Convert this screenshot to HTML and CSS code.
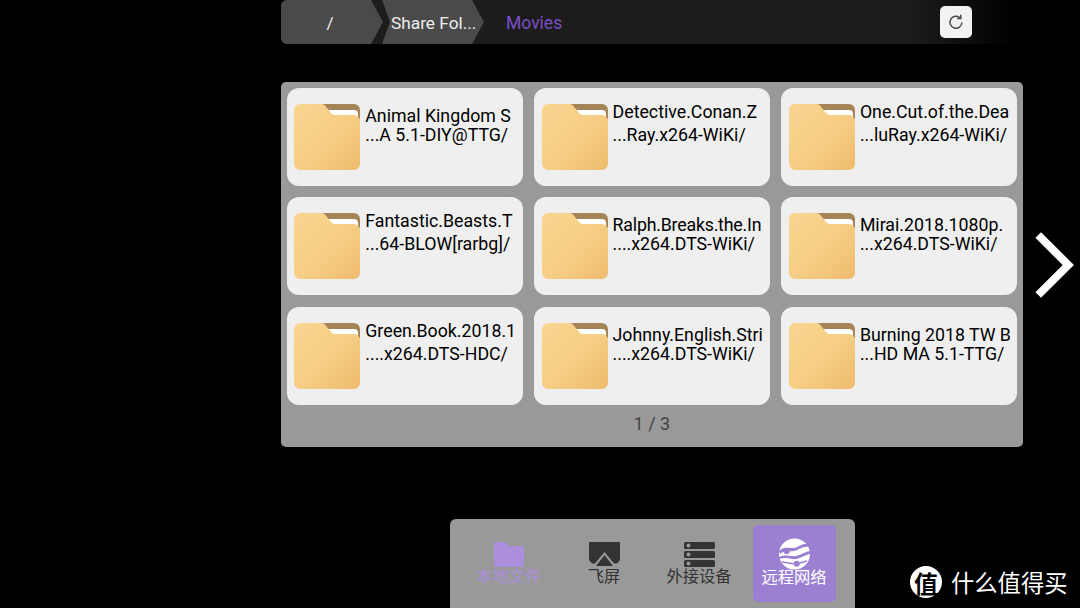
FILE: index.html
```html
<!DOCTYPE html>
<html lang="en">

<head>
  <meta charset="UTF-8">
  <meta name="viewport" content="width=device-width, initial-scale=1.0">
  <title>Movies</title>

  <link rel="stylesheet" href="styles.css">
</head>

<body>

  <svg class="defs" width="0" height="0">
    <defs>
      <linearGradient id="folderFill" x1="0" y1="0" x2="1" y2="1">
        <stop offset="0" stop-color="#f9d590" />
        <stop offset="0.55" stop-color="#f6cd84" />
        <stop offset="1" stop-color="#eebb6d" />
      </linearGradient>
      <symbol id="folder" viewBox="0 0 66 66">
        <path d="M28 0H60a6 6 0 0 1 6 6V15H34z" fill="#a58558" />
        <path d="M32 6H60a4 4 0 0 1 4 4V13H36z" fill="#ffffff" />
        <path d="M6 0H28a4 4 0 0 1 3 1.500L37 9a5 5 0 0 0 4 2H60a6 6 0 0 1 6 6V60a6 6 0 0 1-6 6H6a6 6 0 0 1-6-6V6a6 6 0 0 1 6-6z" fill="url(#folderFill)" />
      </symbol>
    </defs>
  </svg>

  <main class="page">

    <header class="pathbar">
      <div class="crumb crumb-root">/</div>
      <div class="crumb crumb-share">Share Fol...</div>
      <div class="crumb-current">Movies</div>
      <button class="refresh" aria-label="Refresh">
        <svg width="16" height="16" viewBox="0 0 16 16" fill="none" stroke="#4a4a4a" stroke-width="1.500">
          <path d="M14 8.500a6 6 0 1 1-1.900-4.700" />
          <path d="M12.800 0.800V4.500H9.100" />
        </svg>
      </button>
    </header>

    <div class="browser">
      <section class="panel">
        <div class="grid">

          <div class="card">
            <svg class="folder"><use href="#folder" /></svg>
            <div class="name name-low">
              <span>Animal Kingdom S</span>
              <span>...A 5.1-DIY@TTG/</span>
            </div>
          </div>
          <div class="card">
            <svg class="folder"><use href="#folder" /></svg>
            <div class="name">
              <span>Detective.Conan.Z</span>
              <span>...Ray.x264-WiKi/</span>
            </div>
          </div>
          <div class="card">
            <svg class="folder"><use href="#folder" /></svg>
            <div class="name">
              <span>One.Cut.of.the.Dea</span>
              <span>...luRay.x264-WiKi/</span>
            </div>
          </div>

          <div class="card">
            <svg class="folder"><use href="#folder" /></svg>
            <div class="name">
              <span>Fantastic.Beasts.T</span>
              <span>...64-BLOW[rarbg]/</span>
            </div>
          </div>
          <div class="card">
            <svg class="folder"><use href="#folder" /></svg>
            <div class="name name-low name-tight">
              <span>Ralph.Breaks.the.In</span>
              <span>....x264.DTS-WiKi/</span>
            </div>
          </div>
          <div class="card">
            <svg class="folder"><use href="#folder" /></svg>
            <div class="name name-low">
              <span>Mirai.2018.1080p.</span>
              <span>...x264.DTS-WiKi/</span>
            </div>
          </div>

          <div class="card">
            <svg class="folder"><use href="#folder" /></svg>
            <div class="name">
              <span>Green.Book.2018.1</span>
              <span>....x264.DTS-HDC/</span>
            </div>
          </div>
          <div class="card">
            <svg class="folder"><use href="#folder" /></svg>
            <div class="name name-low">
              <span>Johnny.English.Stri</span>
              <span>....x264.DTS-WiKi/</span>
            </div>
          </div>
          <div class="card">
            <svg class="folder"><use href="#folder" /></svg>
            <div class="name name-low">
              <span>Burning 2018 TW B</span>
              <span>...HD MA 5.1-TTG/</span>
            </div>
          </div>

        </div>
        <div class="pager">1 / 3</div>
      </section>

      <svg class="next" width="39" height="66" viewBox="0 0 39 66" fill="none" stroke="#fff" stroke-width="8">
        <path d="M3.200 3L33.300 33L3.200 63" />
      </svg>
    </div>

    <nav class="dock">
      <div class="tab tab-local">
        <svg width="30" height="25" viewBox="0 0 30 25" fill="#ab8fdc">
          <path d="M2 0H11L15 4H28a2 2 0 0 1 2 2V23a2 2 0 0 1-2 2H2a2 2 0 0 1-2-2V2a2 2 0 0 1 2-2z" />
        </svg>
        <span>本地文件</span>
      </div>
      <div class="tab">
        <svg width="31" height="25" viewBox="0 0 31 25" fill="#333">
          <path d="M1 0H30a1 1 0 0 1 1 1V18L28 21.500H25L15.500 10L6 21.500H3L0 18V1a1 1 0 0 1 1-1z" />
          <path d="M15.500 13L24 24H7z" />
        </svg>
        <span>飞屏</span>
      </div>
      <div class="tab">
        <svg width="31" height="25" viewBox="0 0 31 25">
          <rect width="31" height="7" y="0" rx="1.500" fill="#333" />
          <rect width="31" height="7" y="9" rx="1.500" fill="#333" />
          <rect width="31" height="7" y="18" rx="1.500" fill="#333" />
          <circle cx="4.500" cy="3.500" r="2" fill="#999" />
          <circle cx="4.500" cy="12.500" r="2" fill="#999" />
          <circle cx="4.500" cy="21.500" r="2" fill="#999" />
        </svg>
        <span>外接设备</span>
      </div>
      <div class="tab tab-active">
        <svg width="31" height="32" viewBox="0 0 31 32">
          <circle cx="15.500" cy="16" r="15.500" fill="#fff" />
          <path d="M0 13C6 7 12 12 18 9C22 7 26 5 29 6L31 9C26 8 22 10 18 12C13 15 6 11 1 16z" fill="#9b7fd0" />
          <path d="M31 13C24 14 20 19 13 18C9 17.500 5 17 0 19V21C5 19.500 9 20 13 21C20 22 25 17 31 16z" fill="#9b7fd0" />
          <path d="M3 24L14 25.700H18L28 23" fill="none" stroke="#9b7fd0" stroke-width="1.500" />
          <circle cx="7.700" cy="13.300" r="3" fill="#9b7fd0" />
          <circle cx="17.700" cy="25.700" r="3" fill="#9b7fd0" />
        </svg>
        <span>远程网络</span>
      </div>
    </nav>

  </main>

  <div class="watermark">
    <span class="watermark-badge">值</span>
    <span class="watermark-text">什么值得买</span>
  </div>

</body>

</html>
```

FILE: styles.css
```css
* {
  box-sizing: border-box;
}

body {
  margin: 0;
  width: 1080px;
  height: 608px;
  overflow: hidden;
  background-color: #000;
  font-family: Roboto, "Noto Sans CJK SC", sans-serif;
  position: relative;
}

.defs {
  display: block;
  height: 0;
}

.page {
  width: 742px;
  margin-left: 281px;
  display: flex;
  flex-direction: column;
  align-items: center;
}

/* path bar */

.pathbar {
  width: 100%;
  height: 44px;
  display: flex;
  align-items: center;
  background: linear-gradient(to right, #1c1c1c 0, #1c1c1c 85%, #000 99%);
  border-radius: 6px 0 0 6px;
}

.crumb {
  height: 44px;
  display: flex;
  align-items: center;
  padding-top: 1px;
  background-color: #4a4a4a;
  color: #eee;
  font-size: 17.300px;
}

.crumb-root {
  width: 102px;
  justify-content: center;
  padding-right: 4px;
  border-radius: 6px 0 0 6px;
  clip-path: polygon(0 0, 90px 0, 102px 22px, 90px 44px, 0 44px);
}

.crumb-share {
  width: 102px;
  margin-left: -1px;
  padding-left: 9px;
  clip-path: polygon(0 0, 90px 0, 102px 22px, 90px 44px, 0 44px, 8px 22px);
}

.crumb-current {
  margin-left: 22px;
  padding-top: 1px;
  color: #7a4fc4;
  font-size: 17.500px;
}

.refresh {
  width: 32px;
  height: 32px;
  margin-left: auto;
  margin-right: 51px;
  padding: 0;
  display: flex;
  align-items: center;
  justify-content: center;
  background-color: #f2f2f2;
  border: none;
  border-radius: 5px;
}

/* folders */

.browser {
  width: 100%;
  margin-top: 38px;
  position: relative;
}

.panel {
  width: 742px;
  height: 365px;
  padding: 6px 6px 6px 5.700px;
  background-color: #999;
  border-radius: 5px;
}

.grid {
  display: grid;
  grid-template-columns: repeat(3, 236px);
  grid-auto-rows: 98px;
  column-gap: 11.300px;
  row-gap: 11.400px;
}

.card {
  display: flex;
  padding: 16px 7.600px;
  background-color: #efefef;
  border-radius: 12px;
  overflow: hidden;
}

.folder {
  width: 66px;
  height: 66px;
  flex: none;
}

.name {
  width: 153px;
  margin-left: 5px;
  margin-top: -4px;
  display: flex;
  flex-direction: column;
  color: #000;
  font-size: 17.750px;
  line-height: 24px;
  white-space: nowrap;
}

.name span:last-child {
  margin-top: -1px;
}

.name-low span:first-child {
  margin-top: 4px;
  margin-bottom: -4px;
}

.name-tight span:first-child {
  letter-spacing: -0.200px;
}

.pager {
  margin-top: 8px;
  text-align: center;
  color: #444;
  font-size: 18px;
  line-height: 22px;
}

.next {
  position: absolute;
  left: 754px;
  top: 150px;
}

/* dock */

.dock {
  width: 405px;
  height: 89px;
  margin-top: 72px;
  padding: 6px 19px 6px 0;
  display: flex;
  justify-content: flex-end;
  gap: 12px;
  background-color: #999;
  border-radius: 6px 6px 0 0;
}

.tab {
  width: 83px;
  display: flex;
  flex-direction: column;
  align-items: center;
  padding-top: 17px;
  color: #333;
  font-size: 16.300px;
  line-height: 24px;
  white-space: nowrap;
}

.tab-local {
  color: #ab8fdc;
}

.tab-active {
  padding-top: 13px;
  background-color: #9b7fd0;
  border-radius: 5px;
  color: #fff;
}

.tab svg + span {
  margin-top: -2px;
}

.tab-active svg + span {
  margin-top: -4px;
}

/* watermark */

.watermark {
  position: absolute;
  left: 910px;
  top: 565px;
  display: flex;
  align-items: center;
  gap: 9px;
}

.watermark-badge {
  width: 32px;
  height: 32px;
  display: flex;
  align-items: center;
  justify-content: center;
  background-color: #fff;
  border-radius: 50%;
  color: #000;
  font-size: 24px;
  font-weight: 700;
}

.watermark-text {
  color: #fff;
  font-size: 23.300px;
}
```
